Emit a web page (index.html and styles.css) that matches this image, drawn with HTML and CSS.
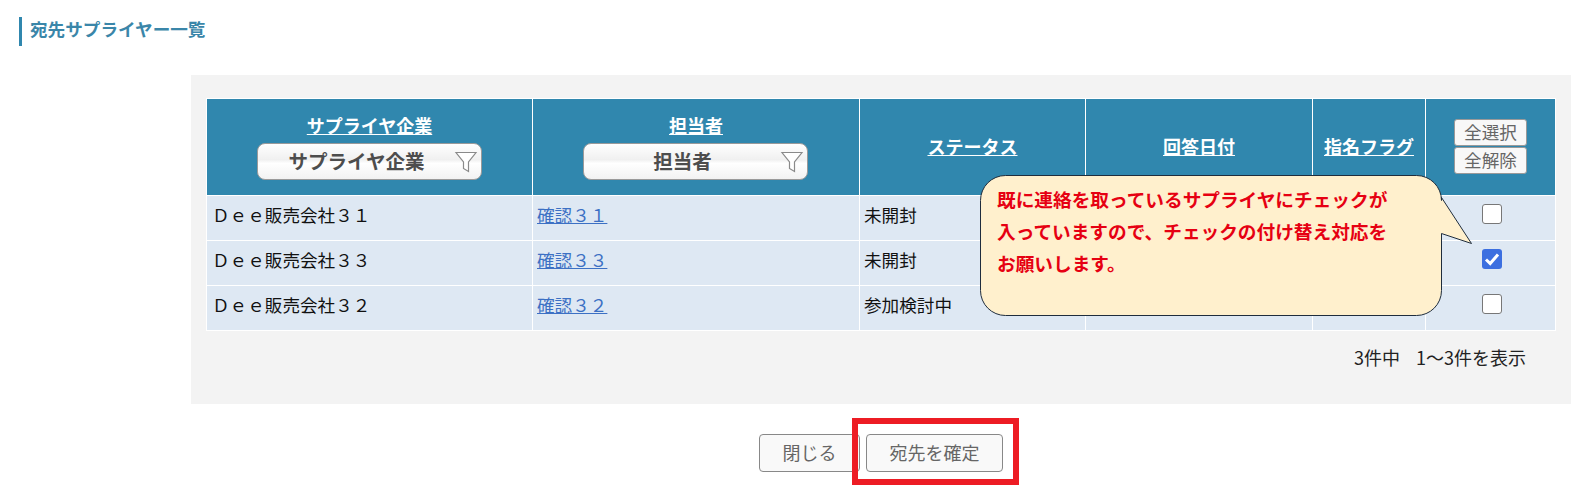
FILE: index.html
```html
<!DOCTYPE html>
<html lang="ja">
<head>
<meta charset="utf-8">
<title>宛先サプライヤー一覧</title>
<link rel="stylesheet" href="styles.css">
</head>
<body>
<h1 class="title">宛先サプライヤー一覧</h1>
<main class="panel">
  <table class="grid">
    <thead>
      <tr>
        <th class="c1"><a href="#">サプライヤ企業</a>
          <div class="filter"><span>サプライヤ企業</span>
            <svg class="funnel" viewBox="0 0 24 24" width="24" height="24"><path d="M2 2.500H22L14.500 12V21.500L9.500 18.500V12Z" fill="#fff" stroke="#8a8a8a" stroke-width="1.2"/></svg>
          </div></th>
        <th class="c2"><a href="#">担当者</a>
          <div class="filter"><span>担当者</span>
            <svg class="funnel" viewBox="0 0 24 24" width="24" height="24"><path d="M2 2.500H22L14.500 12V21.500L9.500 18.500V12Z" fill="#fff" stroke="#8a8a8a" stroke-width="1.2"/></svg>
          </div></th>
        <th class="c3"><a href="#">ステータス</a></th>
        <th class="c4"><a href="#">回答日付</a></th>
        <th class="c5"><a href="#">指名フラグ</a></th>
        <th class="c6"><button class="mini">全選択</button><button class="mini">全解除</button></th>
      </tr>
    </thead>
    <tbody>
      <tr><td>Ｄｅｅ販売会社３１</td><td><a href="#">確認３１</a></td><td>未開封</td><td></td><td></td><td class="chk"><span class="box"></span></td></tr>
      <tr><td>Ｄｅｅ販売会社３３</td><td><a href="#">確認３３</a></td><td>未開封</td><td></td><td></td><td class="chk"><span class="box on"><svg viewBox="0 0 20 20" width="20" height="20"><path d="M4 10.500L8.200 14.500L16 5.500" fill="none" stroke="#fff" stroke-width="3"/></svg></span></td></tr>
      <tr><td>Ｄｅｅ販売会社３２</td><td><a href="#">確認３２</a></td><td>参加検討中</td><td></td><td></td><td class="chk"><span class="box"></span></td></tr>
    </tbody>
  </table>
  <p class="count">3件中&nbsp;&nbsp;&nbsp; 1～3件を表示</p>
</main>
<div class="actions">
  <button class="btn close">閉じる</button>
  <button class="btn confirm">宛先を確定</button>
</div>
<div class="highlight"></div>
<aside class="callout">
  <svg class="callout-shape" viewBox="0 0 495 144" width="495" height="144"><path d="M25.500 .5H436.500A25 25 0 0 1 461.500 25.500V22.500L491.500 68.500L461.500 58.500V115.500A25 25 0 0 1 436.500 140.500H25.500A25 25 0 0 1 .5 115.500V25.500A25 25 0 0 1 25.500 .5Z" fill="#fff0cd" stroke="#1f2d3d" stroke-width="1"/></svg>
  <p class="callout-text">既に連絡を取っているサプライヤにチェックが<br>入っていますので、チェックの付け替え対応を<br>お願いします。</p>
</aside>
</body>
</html>
```
FILE: styles.css
```css
* { box-sizing: border-box; }
html, body { margin: 0; padding: 0; }
body {
  position: relative;
  height: 495px;
  overflow: hidden;
  background: #fff;
  font-family: "Noto Sans CJK JP", "Noto Sans", sans-serif;
  color: #222;
}
.title {
  margin: 17px 0 0 19px;
  height: 29px;
  padding-left: 8px;
  border-left: 3px solid #3087ae;
  font-size: 17.6px;
  line-height: 24px;
  font-weight: 700;
  color: #3a86a9;
}
.panel {
  margin: 29px 17px 0 191px;
  height: 329px;
  padding: 23px 15px 0 15px;
  background: #f3f3f3;
}
.grid {
  width: 1350px;
  border-collapse: collapse;
  table-layout: fixed;
  font-size: 17.6px;
  background: #dee8f3;
}
.grid th, .grid td { border: 1px solid #fff; padding: 0; }
.grid th {
  height: 97px;
  background: #3087ae;
  text-align: center;
  vertical-align: middle;
  font-weight: 700;
  font-size: 18px;
  line-height: 25px;
  color: #fff;
}
.grid th a { color: #fff; position: relative; top: -1px; }
.c1 { width: 326px; }
.c2 { width: 327px; }
.c3 { width: 226px; }
.c4 { width: 227px; }
.c5 { width: 113px; }
.grid td { height: 45px; padding: 0 0 6px 4px; color: #111; line-height: 24px; }
.grid td a { color: #3c70c4; }
.grid td:first-child { padding-left: 5px; }
.grid td.chk { padding: 0 0 12px 3px; text-align: center; }
.filter {
  position: relative;
  width: 225px;
  height: 37px;
  margin: 4px auto 0;
  border: 1px solid #9a9a9a;
  border-radius: 8px;
  background: linear-gradient(#fff 0%, #f0f0f0 45%, #fff 55%, #f2f2f2 100%);
  color: #4d4d4d;
  font-size: 19.5px;
  line-height: 34px;
  padding-right: 26px;
}
.c2 .filter { margin-left: 50px; }
.funnel { position: absolute; right: 3px; top: 6px; }
.mini {
  display: block;
  width: 73px;
  height: 27px;
  margin: 1px auto 0;
  padding: 0 0 2px;
  border: 1px solid #999;
  border-radius: 3px;
  background: #f8f8f8;
  color: #666;
  font: 17.6px/23px "Noto Sans CJK JP", sans-serif;
}
.c6 .mini:first-child { margin-top: -2px; }
.box {
  display: inline-block;
  width: 20px;
  height: 20px;
  vertical-align: middle;
  border: 1px solid #777;
  border-radius: 3px;
  background: #fff;
}
.box.on { border: 0; background: #3c6fe0; }
.box svg { display: block; }
.count {
  margin: 13px 30px 0 0;
  text-align: right;
  font-size: 18px;
  line-height: 26px;
  color: #222;
}
.actions {
  display: flex;
  gap: 6px;
  margin: 30px 0 0 759px;
}
.btn {
  height: 38px;
  padding: 0 0 2px;
  border: 1px solid #888;
  border-radius: 4px;
  background: #f9f9f9;
  color: #666;
  font: 18px/34px "Noto Sans CJK JP", sans-serif;
}
.close { width: 101px; }
.confirm { width: 137px; }
.highlight {
  position: absolute;
  left: 852px;
  top: 418px;
  width: 167px;
  height: 67px;
  border: 6px solid #ed1c24;
}
.callout {
  position: absolute;
  left: 980px;
  top: 175px;
  width: 495px;
  height: 144px;
}
.callout-shape { position: absolute; left: 0; top: 0; }
.callout-text {
  position: relative;
  margin: 0;
  padding: 8px 0 0 17px;
  font-size: 18.67px;
  font-weight: 700;
  line-height: 32px;
  color: #e60012;
  white-space: nowrap;
}
```
